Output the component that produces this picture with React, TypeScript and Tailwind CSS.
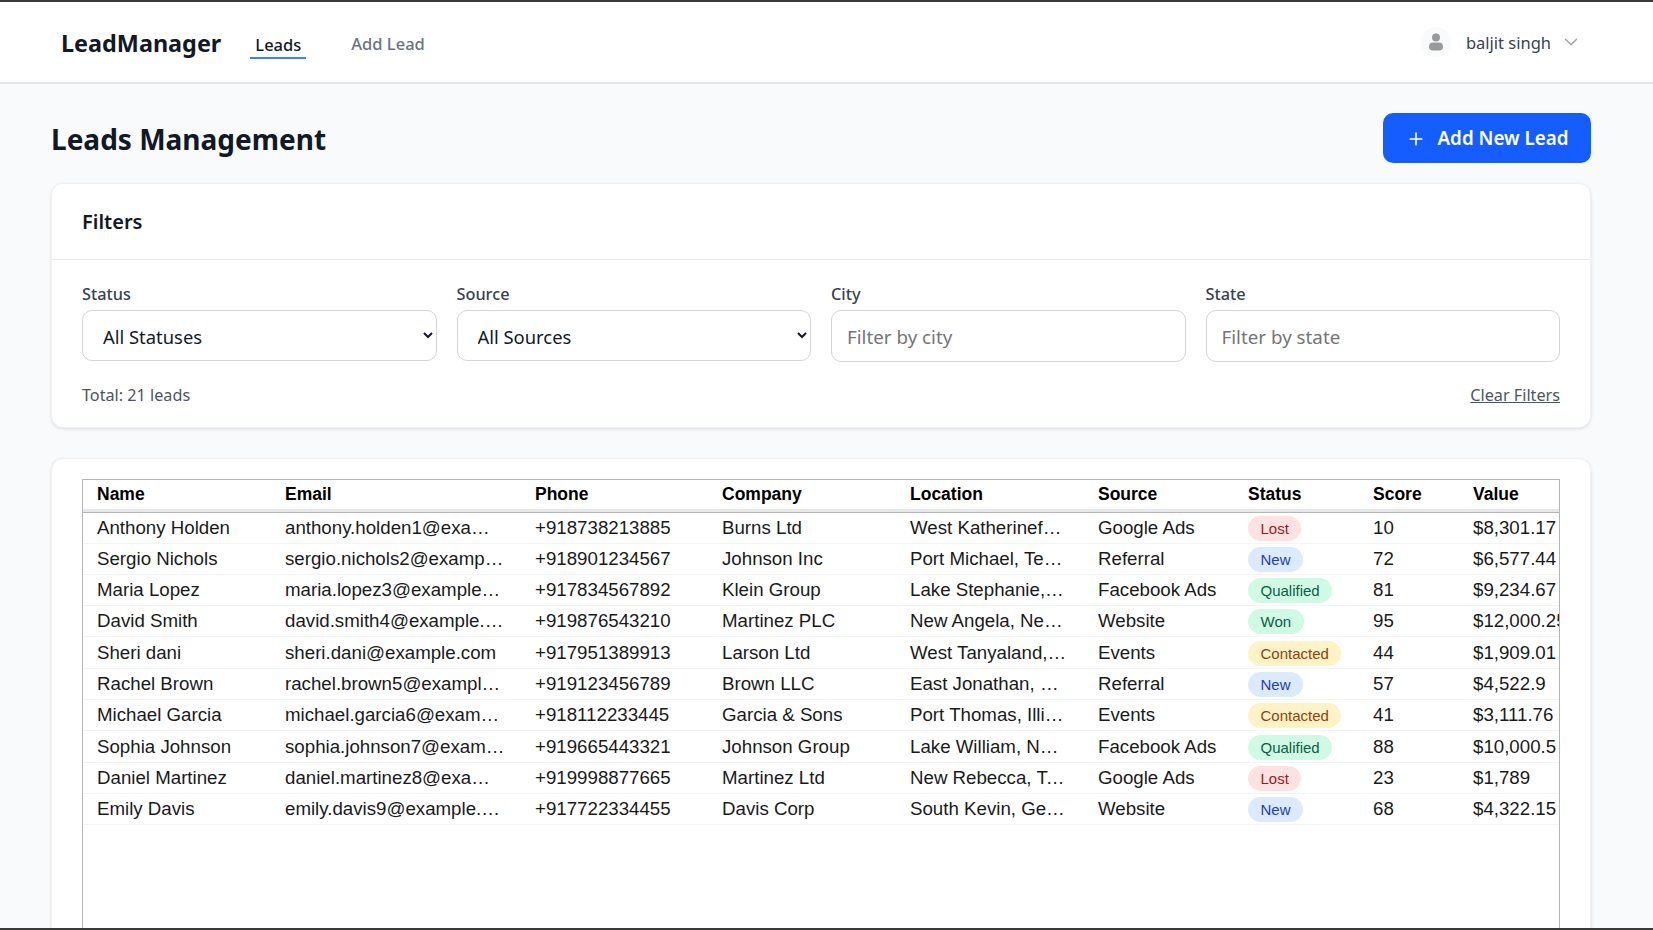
import React from 'react';
import { Plus, ChevronDown } from 'lucide-react';

type Lead = {
  name: string;
  email: string;
  phone: string;
  company: string;
  location: string;
  source: string;
  status: 'Lost' | 'New' | 'Qualified' | 'Won' | 'Contacted';
  score: number;
  value: string;
};

const leads: Lead[] = [
  { name: 'Anthony Holden', email: 'anthony.holden1@example.com', phone: '+918738213885', company: 'Burns Ltd', location: 'West Katherinefort, Kansas', source: 'Google Ads', status: 'Lost', score: 10, value: '$8,301.17' },
  { name: 'Sergio Nichols', email: 'sergio.nichols2@example.com', phone: '+918901234567', company: 'Johnson Inc', location: 'Port Michael, Tennessee', source: 'Referral', status: 'New', score: 72, value: '$6,577.44' },
  { name: 'Maria Lopez', email: 'maria.lopez3@example.com', phone: '+917834567892', company: 'Klein Group', location: 'Lake Stephanie, Ohio', source: 'Facebook Ads', status: 'Qualified', score: 81, value: '$9,234.67' },
  { name: 'David Smith', email: 'david.smith4@example.com', phone: '+919876543210', company: 'Martinez PLC', location: 'New Angela, Nevada', source: 'Website', status: 'Won', score: 95, value: '$12,000.25' },
  { name: 'Sheri dani', email: 'sheri.dani@example.com', phone: '+917951389913', company: 'Larson Ltd', location: 'West Tanyaland, Iowa', source: 'Events', status: 'Contacted', score: 44, value: '$1,909.01' },
  { name: 'Rachel Brown', email: 'rachel.brown5@example.com', phone: '+919123456789', company: 'Brown LLC', location: 'East Jonathan, Maine', source: 'Referral', status: 'New', score: 57, value: '$4,522.9' },
  { name: 'Michael Garcia', email: 'michael.garcia6@example.com', phone: '+918112233445', company: 'Garcia & Sons', location: 'Port Thomas, Illinois', source: 'Events', status: 'Contacted', score: 41, value: '$3,111.76' },
  { name: 'Sophia Johnson', email: 'sophia.johnson7@example.com', phone: '+919665443321', company: 'Johnson Group', location: 'Lake William, New York', source: 'Facebook Ads', status: 'Qualified', score: 88, value: '$10,000.5' },
  { name: 'Daniel Martinez', email: 'daniel.martinez8@example.com', phone: '+919998877665', company: 'Martinez Ltd', location: 'New Rebecca, Texas', source: 'Google Ads', status: 'Lost', score: 23, value: '$1,789' },
  { name: 'Emily Davis', email: 'emily.davis9@example.com', phone: '+917722334455', company: 'Davis Corp', location: 'South Kevin, Georgia', source: 'Website', status: 'New', score: 68, value: '$4,322.15' },
];

const statusColors = {
  Lost: 'bg-[#fee2e2] text-[#991b1b]',
  New: 'bg-[#dbeafe] text-[#1e40af]',
  Qualified: 'bg-[#d1fae5] text-[#065f46]',
  Won: 'bg-[#d1fae5] text-[#065f46]',
  Contacted: 'bg-[#fef3c7] text-[#92400e]',
};

const columns = [
  { label: 'Name', width: 'w-[188px]' },
  { label: 'Email', width: 'w-[250px]' },
  { label: 'Phone', width: 'w-[187px]' },
  { label: 'Company', width: 'w-[188px]' },
  { label: 'Location', width: 'w-[188px]' },
  { label: 'Source', width: 'w-[150px]' },
  { label: 'Status', width: 'w-[125px]' },
  { label: 'Score', width: 'w-[100px]' },
  { label: 'Value', width: 'w-auto' },
];

const cell = 'h-[31.3px] pl-[14px] pr-[16px] py-0 border-b border-[#f3f4f6]';

const App = () => {
  return (
    <div className="h-[930px] overflow-hidden border-y-2 border-[#3a3a3a] bg-[#f9fafb] text-[#111827] font-['Noto_Sans',sans-serif]">
      {/* Navbar */}
      <nav className="h-[82px] flex items-center justify-between bg-white border-b-2 border-[#e5e7eb] pl-[61px] pr-[71px]">
        <div className="flex items-center">
          <span className="text-[23.4px] font-bold mt-[4px]">LeadManager</span>
          <div className="ml-[29px] px-[5px] mt-[5px] pt-[3px] border-b-2 border-[#3b82f6] text-[16.5px] font-medium leading-[26px] h-[30px] flex items-center">
            Leads
          </div>
          <div className="ml-[45px] text-[16.5px] font-medium text-[#6b7280] mt-[5px]">Add Lead</div>
        </div>
        <div className="flex items-center">
          <div className="w-[30px] h-[30px] rounded-full bg-[#f9fafb] flex items-center justify-center">
            <svg viewBox="0 0 20 20" className="w-[20px] h-[20px]" fill="#9a9a9a">
              <circle cx="10" cy="5.5" r="4" />
              <rect x="3" y="10.5" width="14" height="8" rx="4" />
            </svg>
          </div>
          <span className="ml-[15px] text-[16.5px] text-[#374151] mt-[2px]">baljit singh</span>
          <ChevronDown className="ml-[9px] w-[22px] h-[22px] text-[#9ca3af]" strokeWidth={1.5} />
        </div>
      </nav>

      <main className="pl-[51px] pr-[62px] pt-[29px]">
        <div className="flex items-center justify-between h-[50px]">
          <h1 className="text-[28px] font-bold mt-[2px]">Leads Management</h1>
          <button className="w-[208px] h-[50px] pt-[1px] rounded-[10px] bg-[#165dff] text-white flex items-center justify-center text-[18.8px] font-semibold">
            <Plus className="w-[20px] h-[20px] mr-[12px]" strokeWidth={2} />
            Add New Lead
          </button>
        </div>

        {/* Filters */}
        <section className="mt-[20px] bg-white rounded-xl border border-[#f0f1f3] shadow-[0_1px_3px_rgba(0,0,0,0.12)]">
          <div className="h-[76px] flex items-center pl-[30px] border-b border-[#e5e7eb]">
            <h2 className="text-[20px] font-semibold">Filters</h2>
          </div>
          <div className="px-[30px] pt-[20px] pb-[20px]">
            <div className="grid grid-cols-4 gap-[20px]">
              <div>
                <label className="block text-[16.3px] font-medium text-[#374151] mb-[2px] leading-[28px]">Status</label>
                <select className="w-full h-[51px] rounded-[10px] border border-[#d1d5db] bg-white pl-[16px] pr-[20px] pt-[2px] text-[18.4px] text-[#111827]">
                  <option>All Statuses</option>
                </select>
              </div>
              <div>
                <label className="block text-[16.3px] font-medium text-[#374151] mb-[2px] leading-[28px]">Source</label>
                <select className="w-full h-[51px] rounded-[10px] border border-[#d1d5db] bg-white pl-[16px] pr-[20px] pt-[2px] text-[18.4px] text-[#111827]">
                  <option>All Sources</option>
                </select>
              </div>
              <div>
                <label className="block text-[16.3px] font-medium text-[#374151] mb-[2px] leading-[28px]">City</label>
                <input
                  placeholder="Filter by city"
                  className="w-full h-[52px] rounded-[10px] border border-[#d1d5db] bg-white px-[15px] pt-[2px] text-[18.8px] placeholder:text-[#757575]"
                />
              </div>
              <div>
                <label className="block text-[16.3px] font-medium text-[#374151] mb-[2px] leading-[28px]">State</label>
                <input
                  placeholder="Filter by state"
                  className="w-full h-[52px] rounded-[10px] border border-[#d1d5db] bg-white px-[15px] pt-[2px] text-[18.8px] placeholder:text-[#757575]"
                />
              </div>
            </div>
            <div className="mt-[21px] flex items-center justify-between text-[16.2px] text-[#4b5563]">
              <span>Total: 21 leads</span>
              <a className="underline">Clear Filters</a>
            </div>
          </div>
        </section>

        {/* Leads table */}
        <section className="mt-[30px] bg-white rounded-xl border border-[#f0f1f3] shadow-[0_1px_3px_rgba(0,0,0,0.12)] px-[30px] pt-[20px] pb-[30px]">
          <div className="h-[600px] overflow-hidden border border-[#b5b5b5] font-['Liberation_Sans',sans-serif]">
            <table className="w-full table-fixed border-separate border-spacing-0 text-[18.7px] text-[#1a1a1a]">
              <thead>
                <tr>
                  {columns.map((col) => (
                    <th
                      key={col.label}
                      className={`${col.width} h-[32px] pl-[14px] pt-0 pb-[2px] text-left text-[17.5px] font-bold text-black border-b-[3px] border-[#e5e7eb]`}
                    >
                      {col.label}
                    </th>
                  ))}
                </tr>
              </thead>
              <tbody>
                {leads.map((lead, i) => {
                  const row = i === 0 ? `${cell} border-t border-t-[#b5b5b5]` : cell;
                  return (
                    <tr key={lead.email}>
                      <td className={`${row} truncate`}>{lead.name}</td>
                      <td className={`${row} truncate`}>{lead.email}</td>
                      <td className={`${row} truncate`}>{lead.phone}</td>
                      <td className={`${row} truncate`}>{lead.company}</td>
                      <td className={`${row} truncate`}>{lead.location}</td>
                      <td className={`${row} truncate`}>{lead.source}</td>
                      <td className={row}>
                        <span className={`inline-block h-[25px] leading-[25px] rounded-full px-[12.5px] text-[15px] mt-[2px] ${statusColors[lead.status]}`}>
                          {lead.status}
                        </span>
                      </td>
                      <td className={row}>{lead.score}</td>
                      <td className={`h-[31.3px] pl-[14px] py-0 border-b border-[#f3f4f6] overflow-hidden whitespace-nowrap ${i === 0 ? 'border-t border-t-[#b5b5b5]' : ''}`}>{lead.value}</td>
                    </tr>
                  );
                })}
              </tbody>
            </table>
          </div>
        </section>
      </main>
    </div>
  );
};

export default App;
